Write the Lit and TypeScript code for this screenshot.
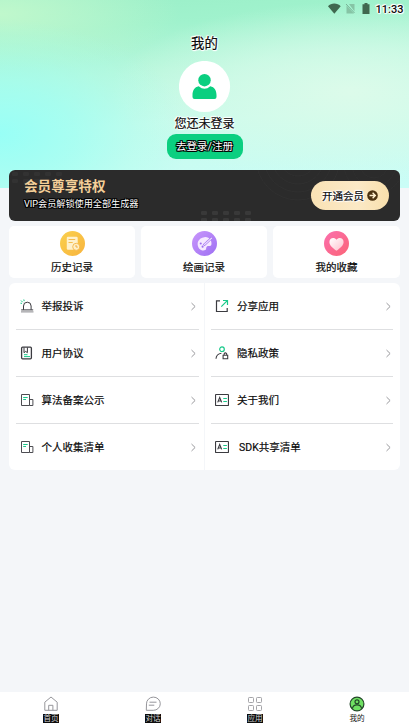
import { LitElement, html, css, svg } from "lit";
import { customElement } from "lit/decorators.js";

const ink = "#3b3b40";
const mint = "#18c98a";

const icons: Record<string, unknown> = {
  alarm: svg`<path d="M3.5 10.8V7a3.8 3.8 0 0 1 7.6 0v3.8M1.2 10.9h12" stroke=${ink}/><path d="M1 12.9h12.500" stroke="#88888c"/><path d="M1 1.5l1.7 1.7M3.8.5l.4 1.6M.5 4.2l1.5.2" stroke=${mint}/>`,
  book: svg`<rect x="1.6" y="1.2" width="9.8" height="11.6" rx="1" stroke=${ink} stroke-width="1.3"/><path d="M4 1.5v5.2l1.7-1.3 1.7 1.3V1.5" stroke=${ink}/><path d="M4 8.7h3.5M4 10.6h6" stroke=${mint}/>`,
  doc: svg`<path d="M9.500 12.5H1.500V1.5h8v11h3.400V6.500H9.500" stroke="#4d4d52"/><path d="M3.2 4.500h4.500M3.2 6.500h2.800" stroke=${mint}/>`,
  share: svg`<path d="M5 1.8H1.5v10.7h10.7V9" stroke=${ink} stroke-width="1.2"/><path d="M6.3 7.7L12 1.9M8 1.5h4.5V6" stroke=${mint} stroke-width="1.2"/>`,
  privacy: svg`<circle cx="7" cy="3.2" r="2.3" stroke=${mint} stroke-width="1.2"/><path d="M1 12.8c.2-3.3 2.2-5.2 5.4-5.6M8.1 9.3h4.6v3.5H8.1zM9.1 9V8.2a1.3 1.3 0 0 1 2.6 0V9" stroke=${ink} stroke-width="1.1"/>`,
  card: svg`<rect x=".5" y="1.5" width="13" height="11" rx=".6" stroke=${ink} stroke-width="1.2"/><path d="M2.7 9.4L4.7 4.5l2 4.9M3.3 8h2.8" stroke=${ink} stroke-width="1.1"/><path d="M8.3 5.500h3.6M8.3 8.500h3.6" stroke=${mint} stroke-width="1.1"/>`,
};

const columns = [
  [["alarm", "举报投诉"], ["book", "用户协议"], ["doc", "算法备案公示"], ["doc", "个人收集清单"]],
  [["share", "分享应用"], ["privacy", "隐私政策"], ["card", "关于我们"], ["card", "SDK共享清单"]],
];

const shortcuts = [
  {
    label: "历史记录",
    art: svg`<defs><linearGradient id="g" x1="0" y1="0" x2="1" y2="1"><stop stop-color="#fad04d"/><stop offset="1" stop-color="#f8b43e"/></linearGradient></defs><circle cx="12" cy="12" r="12" fill="url(#g)"/><rect x="6.500" y="5.500" width="10.500" height="12.500" rx="1.2" fill="#fff1cc"/><path d="M8.2 8.2h6.4M8.2 11h4" stroke="#f5bd50" stroke-width="1"/><circle cx="15.6" cy="15.2" r="3.4" fill="#fff0c8" stroke="#f5b74b" stroke-width=".9"/><path d="M15.4 13.4v2h1.7" fill="none" stroke="#efa83a" stroke-width=".9"/>`,
  },
  {
    label: "绘画记录",
    art: svg`<defs><linearGradient id="g" x1="0" y1="0" x2="1" y2="1"><stop stop-color="#c996fb"/><stop offset="1" stop-color="#9d70f3"/></linearGradient></defs><circle cx="12" cy="12" r="12" fill="url(#g)"/><path d="M17.8 8.5C16.5 6.5 14.5 5.7 12 5.9 8.2 6.2 5.4 8.9 5.4 12.5c0 4.3 4 7.5 7.4 5.8 1.5-.8.2-2.4 1.5-3.4 1.4-1 3.5.4 4.2-1.4.5-1.4.1-3.4-.7-5z" fill="#f6e9ff"/><circle cx="8.4" cy="12" r="1" fill="#9e6ef0"/><circle cx="10.2" cy="15" r="1" fill="#9e6ef0"/><path d="M11.2 13.8l8-7.4" stroke="#a679f1" stroke-width="2.4"/><path d="M11.7 13.3l7.4-6.7" stroke="#f4e5ff" stroke-width="1.1"/>`,
  },
  {
    label: "我的收藏",
    art: svg`<defs><linearGradient id="g" x1="0" y1="0" x2="1" y2="1"><stop stop-color="#fb6fae"/><stop offset="1" stop-color="#fb6476"/></linearGradient><linearGradient id="h" x1="0" y1="0" x2="1" y2="1"><stop stop-color="#fff"/><stop offset="1" stop-color="#ffbfcc"/></linearGradient></defs><circle cx="12" cy="12" r="12" fill="url(#g)"/><path d="M12 19C8 16 5.2 13.6 5.2 10.5c0-4.1 4.8-5 6.8-2 2-3 6.8-2.1 6.8 2C18.8 13.600 16 16 12 19z" fill="url(#h)"/>`,
  },
];

const tabs = [
  { label: "首页", art: svg`<path d="M1.8 14.3V6.2L8 1l6.200 5.200v8.100zM5.700 14.300V9.300h4.200v5" stroke="#96969b"/>` },
  { label: "对话", art: svg`<path d="M1.300 14.300l.2-6.400A6.900 6.600 0 1 1 8.300 14.300zM4.500 6.200h7M3.800 9.200h5.500" stroke="#96969b"/>` },
  { label: "应用", art: svg`<g stroke="#a4a4a8"><rect x="1.500" y="1.500" width="5" height="5" rx=".8"/><rect x="9.500" y="1.500" width="5" height="5" rx=".8"/><rect x="1.500" y="9.500" width="5" height="5" rx=".8"/><rect x="9.500" y="9.500" width="5" height="5" rx=".8"/></g>` },
  { label: "我的", art: svg`<circle cx="8" cy="8" r="6.900" fill="#6fe063" stroke="#24472a" stroke-width="1.200"/><circle cx="8" cy="5.800" r="2" stroke="#24472a" stroke-width="1.200"/><path d="M3.400 12.600c.8-5 8.400-5 9.200 0" stroke="#24472a" stroke-width="1.200"/>` },
];

@customElement("app-root")
export class AppRoot extends LitElement {
  static styles = css`
    :host {
      display: block;
      --halo-w: 0 0 1px #fff, 1px 0 1px #fff, -1px 0 1px #fff, 0 1px 1px #fff, 0 -1px 1px #fff, 1px 1px 1px #fff, -1px -1px 1px #fff;
      --halo-k: 1px 0 #000, -1px 0 #000, 0 1px #000, 0 -1px #000, 1px 1px #000, -1px -1px #000, 1px -1px #000, -1px 1px #000;
      font-family: Roboto, "Noto Sans CJK SC", sans-serif;
    }
    * { box-sizing: border-box; }
    svg { display: block; flex: none; fill: none; }
    .screen { height: 728px; display: flex; flex-direction: column; background: #f4f6f9; color: #0b0b0b; overflow: hidden; }
    .hero {
      height: 188px; flex: none; display: flex; flex-direction: column; align-items: center;
      background:
        radial-gradient(ellipse 190px 115px at 0 134px, #98fff6 0%, #9cfff3b0 40%, #a4ffee50 72%, #a8ffee00 100%),
        radial-gradient(ellipse 180px 60px at 0 14px, #c0f8cc 0%, #bef7cd90 50%, #bcf6ce00 100%),
        radial-gradient(ellipse 240px 90px at 350px 92px, #dcfbea 0%, #d8fbeaa0 50%, #d4fbea00 100%),
        linear-gradient(176deg, #9befc8 0%, #a0f2cd 16%, #b8f7dc 38%, #c8fbec 62%, #cafdf7 100%);
    }
    .status { align-self: stretch; height: 19px; display: flex; justify-content: flex-end; align-items: center; padding-right: 5.500px; }
    .time { font-size: 11px; font-weight: 500; line-height: 18px; text-shadow: var(--halo-w); margin-left: 5px; }
    .title { margin-top: 15px; font-size: 13.400px; line-height: 20px; text-shadow: var(--halo-w); }
    .avatar { margin-top: 7px; }
    .hint { margin-top: 2px; font-size: 12px; line-height: 18px; text-shadow: var(--halo-w); }
    .login { margin-top: 1px; width: 76px; height: 25px; border-radius: 9px; background: #0acf80; color: #fff; font-size: 10.500px; line-height: 25px; text-align: center; text-shadow: var(--halo-k); }
    .main { flex: 1; margin: -18px 9px 0; display: flex; flex-direction: column; gap: 5px; }
    .vip { position: relative; height: 51px; flex: none; border-radius: 6px; background: #2b2b2b; display: flex; justify-content: space-between; align-items: center; padding: 0 11px 0 15px; overflow: hidden; }
    .deco { position: absolute; inset: 0; }
    .copy { position: relative; height: 51px; padding-top: 6px; }
    .head { font-size: 13.600px; line-height: 20px; font-weight: 700; color: #f4cf98; }
    .sub { font-size: 9.150px; line-height: 15px; margin-top: 1px; color: #fff; text-shadow: var(--halo-k); }
    .open { position: relative; width: 78px; height: 29px; border-radius: 15px; background: linear-gradient(90deg, #f9e2b5, #fbe9c6 60%, #f8dfac); display: flex; align-items: center; justify-content: center; gap: 3px; font-size: 10.500px; text-shadow: var(--halo-w); }
    .cards { display: grid; grid-template-columns: 126px 126px 127px; gap: 6px; height: 52px; flex: none; }
    .card { background: #fff; border-radius: 5px; display: flex; flex-direction: column; align-items: center; padding-top: 5px; font-size: 10.500px; }
    .card span { line-height: 16px; margin-top: 4px; }
    .title, .hint, .open, .card span, .row span { -webkit-text-stroke: 0.2px #0b0b0b; }
    .list { display: grid; grid-template-columns: 195px 195px; gap: 1px; height: 187px; flex: none; border-radius: 6px; overflow: hidden; }
    .col { background: #fff; padding: 0 5.500px 0 6.500px; }
    .row { height: 47px; display: flex; align-items: center; padding: 0 3px 0 4px; font-size: 10.500px; border-bottom: 1px solid #dedfe1; }
    .row:last-child { border-bottom: 0; padding-bottom: 1px; }
    .row span { margin: 0 0 2px 8px; flex: 1; white-space: pre; }
    .right { padding-left: 5.500px; padding-right: 7px; }
    .right .row { padding-right: 2px; }
    .right .row span { margin-left: 8.500px; }
    .right .wide span { margin-left: 10.500px; }
    .tabs { height: 36px; flex: none; background: #fff; display: grid; grid-template-columns: repeat(4, 102px); }
    .tab { display: flex; flex-direction: column; align-items: center; padding-top: 3.500px; }
    .tab span { margin-top: 2.500px; font-size: 7.600px; line-height: 9px; color: #d4d4d4; background: #0c0c0c; }
    .tab .on { color: #111; background: none; }
  `;

  render() {
    const dots = (x: number, y: number, cols: number, tone: string) =>
      Array.from({ length: cols * 2 }, (_, i) =>
        svg`<rect x=${x + (i % cols) * 11} y=${y + Math.floor(i / cols) * 7} width="6" height="4" rx="1" fill=${tone}/>`);
    return html`<div class="screen">
      <header class="hero">
        <div class="status">
          <svg width="50" height="19" viewBox="0 0 50 19">
            <path d="M7 6.200C10 2.700 16.500 2.700 19.700 6.200L13.300 13.800z" fill="#40684f"/>
            <path d="M25.500 5.500l7.500 8H25.500zM28 4h5.500v7.500z" fill="#86c4a5"/><path d="M25 4l8.500 9" stroke="#78b296"/>
            <path d="M41.500 4.200h2V3h3v1.200h2V14h-7z" fill="#40684f"/>
          </svg>
          <span class="time">11:33</span>
        </div>
        <div class="title">我的</div>
        <svg class="avatar" width="52" height="52" viewBox="0 0 52 52">
          <circle cx="25.500" cy="25.500" r="25.600" fill="#fff"/>
          <circle cx="25.500" cy="19.200" r="6.200" fill="#0acf80"/>
          <path d="M19.700 25.200Q25.500 30.500 31.300 25.200C35.500 26 37.500 29.500 37.500 34v2q0 2-2 2H15.500q-2 0-2-2v-2c0-4.500 2-8 6.200-8.800z" fill="#0acf80"/>
        </svg>
        <div class="hint">您还未登录</div>
        <div class="login">去登录/注册</div>
      </header>
      <main class="main">
        <section class="vip">
          <svg class="deco" width="391" height="51">
            ${dots(3, 2, 5, "#323232")}${dots(192, 41, 5, "#393939")}
            ${[18, 26, 34, 42].map((r) => svg`<circle cx="289" cy="-12" r=${r} stroke="#303030"/>`)}
            ${[14, 22, 30].map((r) => svg`<circle cx="365" cy="-6" r=${r} stroke="#2f2f2f"/>`)}
          </svg>
          <div class="copy"><div class="head">会员尊享特权</div><div class="sub">VIP会员解锁使用全部生成器</div></div>
          <div class="open">开通会员<svg width="11" height="11" viewBox="0 0 11 11"><circle cx="5.500" cy="5.500" r="5.300" fill="#4b3210"/><path d="M2.500 5.500h5.600M5.600 2.800l2.700 2.700-2.700 2.700" stroke="#fff0cf" stroke-width="1.400"/></svg></div>
        </section>
        <section class="cards">
          ${shortcuts.map((s) => html`<div class="card"><round-icon .art=${s.art}></round-icon><span>${s.label}</span></div>`)}
        </section>
        <section class="list">
          ${columns.map((col, c) => html`<div class="col ${c ? "right" : ""}">
            ${col.map(([icon, label]) => html`<div class="row ${label.startsWith("SDK") ? "wide" : ""}">
              <svg width="14" height="14" viewBox="0 0 14 14">${icons[icon]}</svg><span>${label}</span>
              <svg width="5" height="9" viewBox="0 0 5 9"><path d="M.5 1l3.600 3.500L.5 8" stroke="#98989c"/></svg>
            </div>`)}
          </div>`)}
        </section>
      </main>
      <nav class="tabs">
        ${tabs.map((t, i) => html`<div class="tab"><svg width="16" height="16" viewBox="0 0 16 16">${t.art}</svg><span class=${i === 3 ? "on" : ""}>${t.label}</span></div>`)}
      </nav>
    </div>`;
  }
}

/** Circular badge; its own shadow root keeps gradient ids separate. */
@customElement("round-icon")
export class RoundIcon extends LitElement {
  static properties = { art: { attribute: false } };
  static styles = css`:host { display: block; } svg { display: block; }`;
  declare art: unknown;

  render() {
    return html`<svg width="25" height="25" viewBox="0 0 24 24">${this.art}</svg>`;
  }
}
